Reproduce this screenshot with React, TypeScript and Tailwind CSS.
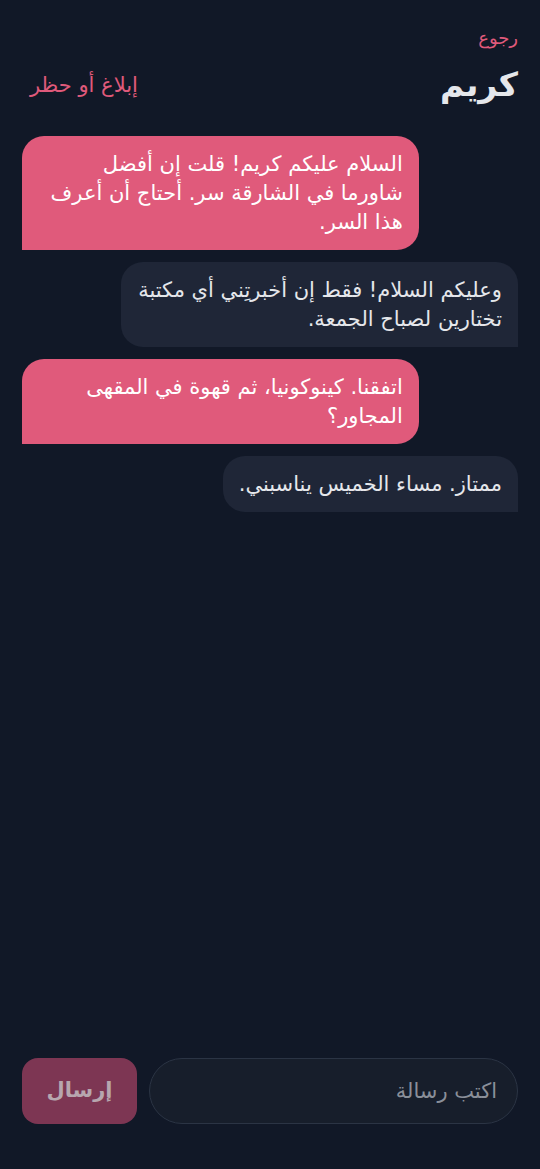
import React from 'react';

type Msg = { id: number; mine: boolean; text: string };

const MESSAGES: Msg[] = [
  { id: 1, mine: true, text: 'السلام عليكم كريم! قلت إن أفضل شاورما في الشارقة سر. أحتاج أن أعرف هذا السر.' },
  { id: 2, mine: false, text: 'وعليكم السلام! فقط إن أخبرتِني أي مكتبة تختارين لصباح الجمعة.' },
  { id: 3, mine: true, text: 'اتفقنا. كينوكونيا، ثم قهوة في المقهى المجاور؟' },
  { id: 4, mine: false, text: 'ممتاز. مساء الخميس يناسبني.' },
];

const App: React.FC = () => {
  return (
    <div
      dir="rtl"
      className="h-screen bg-[#111827] flex flex-col px-[22px] font-['DejaVu_Sans',sans-serif]"
    >
      {/* Header */}
      <div className="pt-[25px]">
        <button className="text-[18px] leading-[26px] text-[#e05a7b]">رجوع</button>
        <div className="flex items-center justify-between mt-[14px]">
          <h1 className="text-[33px] leading-[40px] font-bold text-[#e5e7eb]">كريم</h1>
          <button className="text-[21px] leading-[28px] text-[#e05a7b] ml-2">إبلاغ أو حظر</button>
        </div>
      </div>

      {/* Messages */}
      <div className="flex flex-col gap-3 mt-[31px]">
        {MESSAGES.map(m => (
          <div key={m.id} className={`flex ${m.mine ? 'justify-end' : 'justify-start'}`}>
            <div
              className={`max-w-[80%] px-4 py-[13.5px] text-[21px] leading-[29px] ${
                m.mine
                  ? 'bg-[#e05a7b] text-white rounded-[22px] rounded-bl-none'
                  : 'bg-[#1f2637] text-[#e5e7eb] rounded-[22px] rounded-br-none'
              }`}
            >
              {m.text}
            </div>
          </div>
        ))}
      </div>

      {/* Composer */}
      <div className="mt-auto pb-[45px] flex items-stretch gap-3">
        <input
          placeholder="اكتب رسالة"
          className="flex-1 h-[66px] rounded-full bg-[#171e2b] border border-[#2b3444] px-5 text-[21px] text-[#e5e7eb] placeholder:text-[#8a8f99] outline-none"
        />
        <button
          disabled
          className="w-[115px] h-[66px] rounded-[16px] bg-[#7d3653] text-[#b7a6ae] text-[21px] font-bold"
        >
          إرسال
        </button>
      </div>
    </div>
  );
};

export default App;
